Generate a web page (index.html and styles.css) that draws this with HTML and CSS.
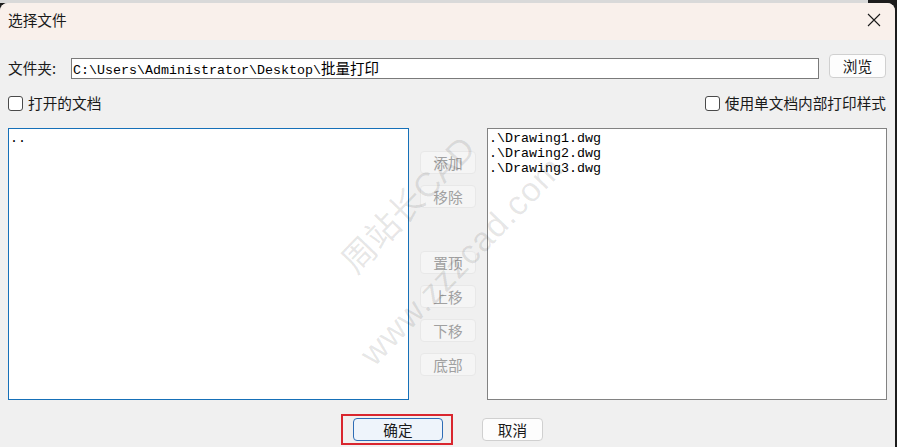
FILE: index.html
```html
<!DOCTYPE html>
<html lang="zh-CN">
<head>
<meta charset="utf-8">
<title>选择文件</title>
<link rel="stylesheet" href="styles.css">
</head>
<body>
<div class="backdrop">
  <div class="window">
    <div class="titlebar">
      <span class="title">选择文件</span>
      <svg class="close" width="14" height="14" viewBox="0 0 14 14"><path d="M1 1 L13 13 M13 1 L1 13" stroke="#1a1a1a" stroke-width="1.1" fill="none"/></svg>
    </div>
    <div class="content">
      <div class="row-folder">
        <span class="label">文件夹:</span>
        <div class="input mono">C:\Users\Administrator\Desktop\<span class="cjk">批量打印</span></div>
        <button class="btn btn-browse">浏览</button>
      </div>
      <div class="row-checks">
        <label class="check"><span class="box"></span>打开的文档</label>
        <label class="check"><span class="box"></span>使用单文档内部打印样式</label>
      </div>
      <div class="row-lists">
        <div class="list list-left mono"><div class="item">..</div></div>
        <div class="mid">
          <button class="btn btn-dis">添加</button>
          <button class="btn btn-dis">移除</button>
          <button class="btn btn-dis gap">置顶</button>
          <button class="btn btn-dis">上移</button>
          <button class="btn btn-dis">下移</button>
          <button class="btn btn-dis">底部</button>
        </div>
        <div class="list list-right mono">
          <div class="item">.\Drawing1.dwg</div>
          <div class="item">.\Drawing2.dwg</div>
          <div class="item">.\Drawing3.dwg</div>
        </div>
      </div>
      <div class="row-bottom">
        <span class="mark"><button class="btn btn-ok">确定</button></span>
        <button class="btn btn-cancel">取消</button>
      </div>
    </div>
    <div class="wm wm1">周站长CAD</div>
    <div class="wm wm2">www.zzzcad.com</div>
  </div>
</div>
</body>
</html>
```
FILE: styles.css
```css
html, body {
  margin: 0;
  padding: 0;
}
body {
  width: 897px;
  height: 447px;
  overflow: hidden;
  background: #1c1c1c;
  font-family: "Noto Sans CJK SC", "Liberation Sans", sans-serif;
  font-size: 14.67px;
  color: #1a1a1a;
}
.backdrop {
  height: 447px;
  background: linear-gradient(#d9d9d9, #d9d9d9) no-repeat 0 0 / 868px 3px, #1c1c1c;
}
.window {
  position: relative;
  top: 3px;
  width: 895px;
  height: 444px;
  background: #f0f0f0;
  border-radius: 8px 8px 0 0;
  overflow: hidden;
}
.titlebar {
  height: 37px;
  background: #f9f0eb;
  display: flex;
  align-items: center;
  justify-content: space-between;
  padding: 0 14px 0 8px;
}
.title {
  line-height: 16px;
  margin-top: -4px;
}
.close {
  margin-top: -3px;
}
.content {
  padding: 0 8px;
}
.row-folder {
  display: flex;
  align-items: flex-start;
  margin-top: 14px;
  height: 25px;
}
.label {
  width: 63px;
  line-height: 20px;
  margin-top: 4px;
}
.mono {
  font-family: "Liberation Mono", "Noto Sans CJK SC", monospace;
  font-size: 13.33px;
  color: #000;
}
.cjk {
  font-family: "Noto Sans CJK SC", sans-serif;
  font-size: 14.5px;
}
.input {
  box-sizing: border-box;
  width: 748px;
  height: 21px;
  margin-top: 4px;
  background: #fff;
  border: 1px solid #7a7a7a;
  padding: 0 1px;
  line-height: 18px;
  white-space: nowrap;
}
.btn {
  box-sizing: border-box;
  font-family: "Noto Sans CJK SC", sans-serif;
  font-size: 14.67px;
  color: #1a1a1a;
  background: #fdfdfd;
  border: 1px solid #d0d0d0;
  border-radius: 4px;
  padding: 0;
  height: 23px;
  line-height: 20px;
}
.btn-browse {
  width: 57px;
  height: 24px;
  margin-left: 10px;
}
.row-checks {
  display: flex;
  justify-content: space-between;
  margin-top: 17px;
  height: 14px;
  padding-right: 1px;
}
.check {
  display: flex;
  align-items: center;
  gap: 5px;
  line-height: 14px;
}
.box {
  box-sizing: border-box;
  width: 15px;
  height: 15px;
  border: 1px solid #4a4a4a;
  border-radius: 3px;
  background: #fff;
}
.row-lists {
  display: flex;
  margin-top: 18px;
  height: 272px;
}
.list {
  box-sizing: border-box;
  width: 400px;
  height: 272px;
  background: #fff;
  padding: 2px 1px;
}
.list-left {
  width: 401px;
  border: 1px solid #1670b8;
}
.list-right {
  border: 1px solid #828282;
}
.item {
  line-height: 15px;
  white-space: pre;
}
.mid {
  width: 56px;
  margin: 0 11px 0 11px;
  display: flex;
  flex-direction: column;
  padding-top: 23px;
  gap: 11px;
}
.btn-dis {
  width: 56px;
  color: #a0a0a0;
  background: #f5f5f5;
  border-color: #e8e8e8;
}
.gap {
  margin-top: 32px;
}
.row-bottom {
  display: flex;
  align-items: center;
  margin-top: 14px;
  padding-left: 333px;
}
.mark {
  display: flex;
  border: 2px solid #d9262e;
  padding: 2px 8px 2px 10px;
}
.btn-ok {
  width: 90px;
  background: #eef4fb;
  border-color: #2d6cb5;
}
.btn-cancel {
  width: 61px;
  margin-left: 29px;
}
.wm {
  position: absolute;
  transform-origin: 0 100%;
  transform: rotate(-46deg);
  color: rgba(0, 0, 0, 0.1);
  font-family: "Liberation Sans", "Noto Sans CJK SC", sans-serif;
  white-space: nowrap;
  pointer-events: none;
}
.wm1 {
  left: 362px;
  top: 238px;
  font-size: 34px;
  line-height: 40px;
}
.wm2 {
  left: 380px;
  top: 330px;
  font-size: 34px;
  line-height: 40px;
  letter-spacing: 1px;
}
```
